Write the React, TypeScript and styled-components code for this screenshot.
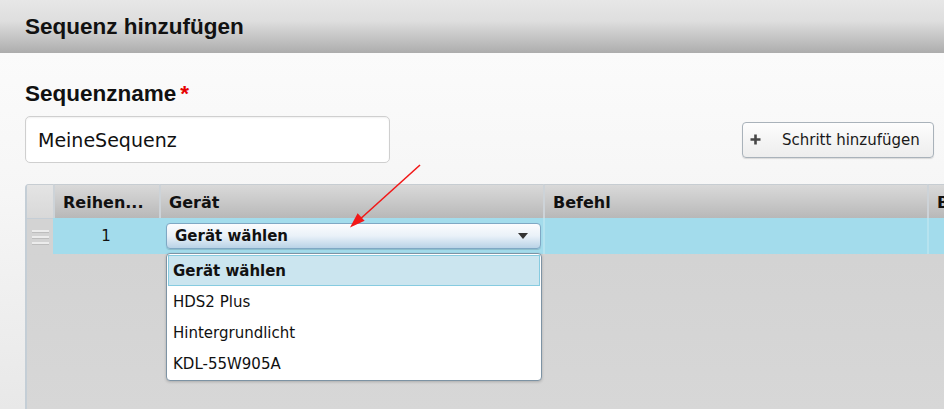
import React from "react";
import styled, { createGlobalStyle } from "styled-components";

const GlobalStyle = createGlobalStyle`
  html, body { margin: 0; padding: 0; }
  body { font-family: "DejaVu Sans", Verdana, sans-serif; background: #f4f4f4; }
  * { box-sizing: border-box; }
`;

const Page = styled.div`
  position: relative;
  width: 944px;
  height: 409px;
  overflow: hidden;
  display: flex;
  flex-direction: column;
`;

const TitleBar = styled.div`
  height: 53px;
  flex: none;
  display: flex;
  align-items: center;
  padding-left: 25px;
  background: linear-gradient(#e7e7e7 0%, #dedede 40%, #adadad 100%);
  font-family: "Liberation Sans", Arial, sans-serif;
  font-weight: bold;
  font-size: 22.5px;
  line-height: 26px;
  color: #111;
`;

const Content = styled.div`
  flex: 1;
  display: flex;
  flex-direction: column;
  padding-left: 25px;
  background: linear-gradient(#fbfbfb 0%, #f6f6f6 40%, #e8e8e8 100%);
`;

const FieldLabel = styled.div`
  margin-top: 28px;
  font-family: "Liberation Sans", Arial, sans-serif;
  font-weight: bold;
  font-size: 22.5px;
  line-height: 26px;
  color: #111;
`;

const Required = styled.span`
  color: #e60000;
  margin-left: 4px;
`;

const FormRow = styled.div`
  margin-top: 9px;
  display: flex;
  align-items: center;
  justify-content: space-between;
  padding-right: 10px;
`;

const TextInput = styled.div`
  width: 365px;
  height: 47px;
  display: flex;
  align-items: center;
  padding-left: 12px;
  background: #fff;
  border: 1px solid #cfcfcf;
  border-radius: 5px;
  box-shadow: inset 0 1px 2px rgba(0, 0, 0, 0.06);
  font-size: 19px;
  color: #111;
`;

const Button = styled.div`
  width: 192px;
  height: 36px;
  display: flex;
  align-items: center;
  padding-left: 7px;
  gap: 21px;
  background: linear-gradient(#fdfdfd, #ededed);
  border: 1px solid #a9b2ba;
  border-radius: 4px;
  box-shadow: 0 1px 1px rgba(0, 0, 0, 0.12);
  font-size: 15px;
  color: #1a1a1a;
`;

const Grid = styled.div`
  margin-top: 21px;
  flex: 1;
  border-left: 2px solid #c4ced6;
  border-top-left-radius: 4px;
  background: linear-gradient(#d1d1d1, #d7d7d7);
  overflow: hidden;
`;

const Row = styled.div<{ $head?: boolean }>`
  display: grid;
  grid-template-columns: 26px 106px 384px 384px 1fr;
  height: ${(p) => (p.$head ? 34 : 36)}px;
`;

const HeadCell = styled.div<{ $handle?: boolean }>`
  display: flex;
  align-items: center;
  padding: 2px 0 0 8px;
  border-top: 1px solid #c7cdd2;
  border-left: ${(p) => (p.$handle ? "none" : "2px solid #cdd3d8")};
  background: ${(p) =>
    p.$handle
      ? "linear-gradient(#e4e4e4, #d8d8d8)"
      : "linear-gradient(#d9d9d9, #c9c9c9 50%, #b8b8b8)"};
  font-weight: bold;
  font-size: 16px;
  color: #111;
  white-space: nowrap;
  overflow: hidden;
`;

const Cell = styled.div<{ $align?: string; $sep?: boolean }>`
  position: relative;
  display: flex;
  align-items: center;
  justify-content: ${(p) => p.$align || "flex-start"};
  background: #a3dcec;
  border-left: ${(p) => (p.$sep ? "2px solid #b6e3ef" : "none")};
  font-size: 15px;
  color: #111;
`;

const HandleCell = styled.div`
  display: flex;
  flex-direction: column;
  align-items: center;
  justify-content: center;
  gap: 4px;
  background: #d3d3d3;
  border-top: 1px solid #c5ced6;
`;

const HandleLine = styled.div`
  width: 17px;
  height: 2px;
  background: #ececec;
  box-shadow: 0 1px 0 #bdbdbd;
`;

const Select = styled.div`
  width: 375px;
  height: 26px;
  margin: 0 0 0 7px;
  display: flex;
  align-items: center;
  justify-content: space-between;
  padding: 0 12px 0 8px;
  border: 1px solid #7fa8c4;
  border-radius: 4px;
  background: linear-gradient(#fbfcfe 0%, #e9f1f8 50%, #b9d3e6 100%);
  box-shadow: 0 1px 1px rgba(0, 0, 0, 0.15);
  font-weight: bold;
  font-size: 15px;
  color: #111;
`;

const Caret = styled.span`
  width: 0;
  height: 0;
  border-left: 5px solid transparent;
  border-right: 5px solid transparent;
  border-top: 6px solid #333;
`;

const Dropdown = styled.div`
  position: absolute;
  top: 35px;
  left: 7px;
  width: 376px;
  padding: 1px;
  background: #fff;
  border: 1px solid #7d93a4;
  border-radius: 4px;
  box-shadow: 0 1px 3px rgba(0, 0, 0, 0.2);
  z-index: 2;
`;

const Option = styled.div<{ $active?: boolean }>`
  height: 31px;
  display: flex;
  align-items: center;
  padding-left: ${(p) => (p.$active ? 4 : 5)}px;
  border: ${(p) => (p.$active ? "1px solid #86cbe0" : "none")};
  background: ${(p) => (p.$active ? "#cbe5ef" : "transparent")};
  font-weight: ${(p) => (p.$active ? "bold" : "normal")};
  font-size: 15px;
  color: #111;
`;

const Annotation = styled.svg`
  position: absolute;
  left: 0;
  top: 0;
  pointer-events: none;
  z-index: 5;
`;

const PlusIcon = () => (
  <svg width="11" height="11" viewBox="0 0 11 11">
    <path d="M5.5 0.5v10M0.5 5.5h10" stroke="#474747" strokeWidth="2.6" />
  </svg>
);

const options = ["Gerät wählen", "HDS2 Plus", "Hintergrundlicht", "KDL-55W905A"];

export default function App() {
  return (
    <>
      <GlobalStyle />
      <Page>
        <TitleBar>Sequenz hinzufügen</TitleBar>
        <Content>
          <FieldLabel>
            Sequenzname<Required>*</Required>
          </FieldLabel>
          <FormRow>
            <TextInput>MeineSequenz</TextInput>
            <Button>
              <PlusIcon />
              Schritt hinzufügen
            </Button>
          </FormRow>
          <Grid>
            <Row $head>
              <HeadCell $handle />
              <HeadCell>Reihen...</HeadCell>
              <HeadCell>Gerät</HeadCell>
              <HeadCell>Befehl</HeadCell>
              <HeadCell>B</HeadCell>
            </Row>
            <Row>
              <HandleCell>
                <HandleLine />
                <HandleLine />
                <HandleLine />
              </HandleCell>
              <Cell $align="center">1</Cell>
              <Cell>
                <Select>
                  Gerät wählen
                  <Caret />
                </Select>
                <Dropdown>
                  {options.map((o, i) => (
                    <Option key={o} $active={i === 0}>
                      {o}
                    </Option>
                  ))}
                </Dropdown>
              </Cell>
              <Cell $sep />
              <Cell $sep />
            </Row>
          </Grid>
        </Content>
        <Annotation width="944" height="409" viewBox="0 0 944 409">
          <line x1="420" y1="165" x2="358" y2="221" stroke="#f21818" strokeWidth="1.6" />
          <polygon points="350,227.5 357.6,213.2 364.6,220.8" fill="#f21818" />
        </Annotation>
      </Page>
    </>
  );
}
